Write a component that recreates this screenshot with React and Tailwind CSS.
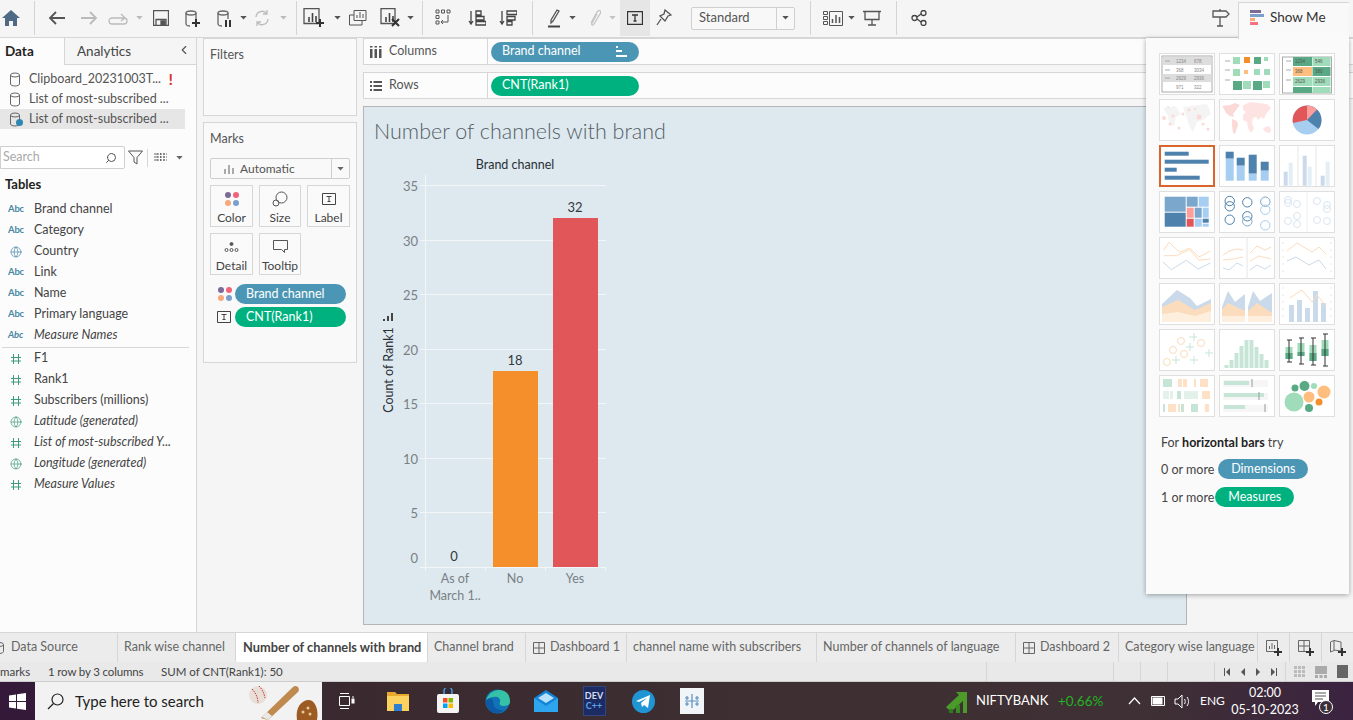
import React from "react";
import { Globe, ChevronLeft, Search } from "lucide-react";

const S = ({ w = 22, h = 22, children, vb, c = "#555", sw = 1.3 }) => (
  <svg width={w} height={h} viewBox={vb || `0 0 ${w} ${h}`} fill="none" stroke={c} strokeWidth={sw} className="shrink-0">
    {children}
  </svg>
);
const Caret = ({ c = "#777" }) => (
  <svg width="7" height="4" viewBox="0 0 8 5" className="shrink-0"><path d="M0 0h8L4 4.5z" fill={c} /></svg>
);
const Cell = ({ className, children }) => <div className={`flex shrink-0 items-center justify-center h-full ${className}`}>{children}</div>;
const Sep = () => <div className="w-px h-[34px] bg-[#d4d4d4] shrink-0" />;

const Bars = ({ c = "#555" }) => <g stroke={c} strokeWidth="1.6"><path d="M6 14V9M9.5 14V5M13 14V8" /></g>;
const Db = ({ c = "#666" }) => (
  <g stroke={c}>
    <ellipse cx="9" cy="5" rx="5" ry="2" />
    <path d="M4 5v11c0 1 2 2 4 2M14 5v6" />
  </g>
);
const Plus = ({ x, y, c = "#333" }) => <path d={`M${x - 4} ${y}h8M${x} ${y - 4}v8`} stroke={c} strokeWidth="2" />;

function Toolbar() {
  return (
    <div className="flex items-center h-[38px] pb-px bg-[#f5f5f5] border-b border-[#d6d6d6] shrink-0">
      <Cell className="w-[22px]"><svg width="18" height="16" viewBox="0 0 18 16"><path d="M9 0L0 8h3v8h4v-5h4v5h4V8h3z" fill="#4f6a85" /></svg></Cell>
      <Cell className="w-[24px]"><Sep /></Cell>
      <Cell className="w-[22px]"><S w={18} h={16} c="#555" sw={1.8}><path d="M17 8H2M8 2L2 8l6 6" /></S></Cell>
      <Cell className="w-[42px]"><S w={18} h={16} c="#bbb" sw={1.8}><path d="M1 8h15M10 2l6 6-6 6" /></S></Cell>
      <Cell className="w-[16px]"><S w={20} h={14} c="#bbb"><path d="M16 7H4a3 3 0 0 0 0 6h12a3 3 0 0 0 0-6M13 3l4 4-4 3" /></S></Cell>
      <Cell className="w-[26px]"><Caret c="#bbb" /></Cell>
      <Cell className="w-[18px]"><S w={16} h={16} c="#555"><path d="M.5.5h15v15H.5zM3 15.5v-6h10v6" /><path d="M8 11h4v4H8z" fill="#555" /></S></Cell>
      <Cell className="w-[44px]"><S w={20} h={20}><Db /><Plus x={14} y={15} /></S></Cell>
      <Cell className="w-[20px]"><S w={20} h={20}><Db /><path d="M12 12v7M16 12v7" stroke="#333" strokeWidth="2" /></S></Cell>
      <Cell className="w-[18px]"><Caret c="#555" /></Cell>
      <Cell className="w-[20px]"><S w={18} h={18} c="#bbb"><path d="M3 8a6 6 0 0 1 11-3M15 10a6 6 0 0 1-11 3M14 1v4h-4M4 17v-4h4" /></S></Cell>
      <Cell className="w-[22px]"><Caret c="#bbb" /></Cell>
      <Cell className="w-[4px]"><Sep /></Cell>
      <Cell className="w-[32px]"><S w={22} h={20} c="#555"><path d="M1 .5h15v15H1z" /><Bars c="#444" /><Plus x={17} y={15} /></S></Cell>
      <Cell className="w-[14px]"><Caret c="#555" /></Cell>
      <Cell className="w-[28px]"><S w={18} h={16} c="#555" sw={1}><path d="M5 .5h12v10H5zM5 5H.5v10H13v-4" /><path d="M8 8V5M11 8V2M14 8V4" /></S></Cell>
      <Cell className="w-[36px]"><S w={20} h={20} c="#555"><path d="M1 .5h14v15H1z" /><Bars c="#444" /><path d="M12 11l7 7M19 11l-7 7" stroke="#333" strokeWidth="2" /></S></Cell>
      <Cell className="w-[4px]"><Caret c="#555" /></Cell>
      <Cell className="w-[20px]"><Sep /></Cell>
      <Cell className="w-[22px]"><S w={16} h={18} c="#555" sw={1}><path d="M1 1h3v3H1zM6.500 1h3v3h-3zM12 1h3v3h-3zM1 6.500h3v3H1zM1 12h3v3H1zM13 6v7H6M8 11l-2 2 2 2" /></S></Cell>
      <Cell className="w-[46px]"><S w={18} h={16} c="#444"><path d="M3 1v13M1 11l2 3 2-3" /><path d="M8 1h5v4H8zM8 6.500h8v3.500H8zM8 11.500h10v3.500H8z" /></S></Cell>
      <Cell className="w-[16px]"><S w={18} h={16} c="#444"><path d="M3 1v13M1 11l2 3 2-3" /><path d="M8 1h10v3.500H8zM8 6.500h8v3.500H8zM8 11.500h5v3.500H8z" /></S></Cell>
      <Cell className="w-[32px]"><Sep /></Cell>
      <Cell className="w-[12px]"><S w={14} h={20} c="#555"><path d="M4 12L10 2l2 1-6 10-2 2z" /><path d="M1 18.500h12" stroke="#444" strokeWidth="2" /></S></Cell>
      <Cell className="w-[24px]"><Caret c="#555" /></Cell>
      <Cell className="w-[20px]"><S w={14} h={18} c="#c4c4c4"><path d="M4 14L10 3c2-3 5-1 3 2L7 15c-1 2-3 1-2-1l5-9" /></S></Cell>
      <Cell className="w-[16px]"><Caret c="#c4c4c4" /></Cell>
      <Cell className="w-[30px] bg-[#e6e6e6]"><S w={16} h={14} c="#333"><path d="M.5.5h15v13H.5z" /><path d="M5 4h6M8 4v6M6.500 10h3" /></S></Cell>
      <Cell className="w-[28px]"><S w={16} h={18} c="#555"><path d="M9 1l6 5-3 1-3 5-5-5 4-2zM5 10l-4 6" /></S></Cell>
      <div className="ml-[13px] w-[104px] h-[23px] shrink-0 border border-[#cfcfcf] rounded-[2px] bg-[#f8f8f8] flex items-center text-[13px] text-[#555]">
        <div className="flex-1 pl-[7px]">Standard</div>
        <div className="w-[18px] h-full border-l border-[#cfcfcf] flex items-center justify-center"><Caret c="#555" /></div>
      </div>
      <Cell className="w-[30px]"><Sep /></Cell>
      <Cell className="w-[16px]"><S w={20} h={15} c="#555" sw={1}><path d="M.5.500h4v3h-4zM.5 5.500h4v3h-4zM.5 10.500h4v3h-4zM6.500.5h13v14h-13z" /><path d="M9.500 12V8M13 12V4M16.500 12V6" strokeWidth="1.500" /></S></Cell>
      <Cell className="w-[20px]"><Caret c="#555" /></Cell>
      <Cell className="w-[22px]"><S w={18} h={16} c="#555"><path d="M0 1.500h18M2 1.500v8h14v-8M9 9.500v5M5 15h8" /></S></Cell>
      <Cell className="w-[26px]"><Sep /></Cell>
      <Cell className="w-[20px]"><S w={16} h={16} c="#444"><circle cx="3.500" cy="8" r="2.500" /><circle cx="12.500" cy="3" r="2.500" /><circle cx="12.500" cy="13" r="2.500" /><path d="M6 7l4-3M6 9l4 3" /></S></Cell>
      <div className="flex-1" />
      <Cell className="w-[34px]"><S w={18} h={18} c="#555"><path d="M1 2h13l3 3-3 3H1zM8 8v9M5 17h6M8 0v2" /></S></Cell>
      <div className="w-[115px] shrink-0" />
    </div>
  );
}

const Abc = () => <span className="w-[16px] text-[9.500px] font-bold text-[#4a87a3] tracking-[-0.2px]">Abc</span>;
const GlobeI = ({ c = "#4a87a3" }) => <span className="w-[16px] flex justify-center"><Globe size={12} color={c} strokeWidth={1.4} /></span>;
const HashI = () => <svg width="16" height="12" viewBox="0 0 16 12" stroke="#3f9c80" className="shrink-0"><path d="M5.500 1v10M10.500 1v10M3 4.500h10M3 8h10" /></svg>;

const Field = ({ icon, italic, children }) => (
  <div className={`h-[21px] flex items-center pl-[8px] gap-[10px] text-[#444] text-[12.500px] whitespace-nowrap ${italic ? "italic" : ""}`}>
    {icon}<span>{children}</span>
  </div>
);
const DsIcon = () => <svg width="14" height="15" viewBox="0 0 14 15" fill="none" stroke="#666" className="shrink-0"><ellipse cx="6" cy="3" rx="4.500" ry="2" /><path d="M1.500 3v9c0 1 2 2 4.500 2s4.500-1 4.500-2V3" /></svg>;

function DataPane() {
  return (
    <div className="w-[197px] shrink-0 bg-[#fcfcfc] border-r border-[#d6d6d6] flex flex-col">
      <div className="flex h-[27px] text-[13.500px] shrink-0">
        <div className="w-[65px] pl-[5px] pt-[3px] font-bold text-[#222] border-r border-[#d6d6d6]">Data</div>
        <div className="flex-1 bg-[#f5f5f5] border-b border-[#d6d6d6] pl-[12px] pt-[3px] text-[#444] flex justify-between pr-[5px]">
          <span>Analytics</span><ChevronLeft size={14} color="#555" className="mt-[2px]" />
        </div>
      </div>
      <div className="pt-[4px] text-[12.500px] text-[#555] shrink-0">
        <div className="h-[20px] flex items-center pl-[9px] gap-[6px] w-[185px]"><DsIcon /><span className="truncate flex-1">Clipboard_20231003T...</span><span className="text-[#d33] font-bold text-[16px] pr-[12px]">!</span></div>
        <div className="h-[20px] flex items-center pl-[9px] gap-[6px] w-[185px]"><DsIcon /><span>List of most-subscribed ...</span></div>
        <div className="h-[20px] flex items-center pl-[9px] gap-[6px] w-[185px] bg-[#e6e6e6] relative"><DsIcon /><span>List of most-subscribed ...</span>
          <span className="absolute left-[16px] top-[10px] w-[7px] h-[7px] rounded-full bg-[#2f86b0]" />
        </div>
      </div>
      <div className="mt-[17px] h-[23px] flex items-center shrink-0">
        <div className="w-[125px] h-[23px] border border-[#cfcfcf] rounded-r-[2px] bg-white flex items-center justify-between pl-[2px] pr-[7px] text-[12.500px] text-[#aaa]">
          <span>Search</span><Search size={12} color="#555" className="-scale-x-100" />
        </div>
        <svg width="15" height="15" viewBox="0 0 15 15" fill="none" stroke="#555" className="ml-[3px] shrink-0"><path d="M.5 1h14L9 7.500V14L6 12V7.500z" /></svg>
        <div className="w-px h-[18px] bg-[#d6d6d6] ml-[4px]" />
        <svg width="13" height="9" viewBox="0 0 13 9" stroke="#666" className="ml-[6px]"><path d="M0 1h13M0 4h13M0 7h13M3 0v9M6.500 0v9M10 0v9" strokeDasharray="2 1" /></svg>
        <span className="ml-[9px]"><Caret c="#666" /></span>
      </div>
      <div className="mt-[6px] pl-[5px] h-[20px] font-bold text-[13px] text-[#222] shrink-0">Tables</div>
      <div className="mt-[4px]">
        <Field icon={<Abc />}>Brand channel</Field>
        <Field icon={<Abc />}>Category</Field>
        <Field icon={<GlobeI />}>Country</Field>
        <Field icon={<Abc />}>Link</Field>
        <Field icon={<Abc />}>Name</Field>
        <Field icon={<Abc />}>Primary language</Field>
        <Field icon={<Abc />} italic>Measure Names</Field>
        <div className="h-px bg-[#d6d6d6] ml-[2px] mr-[7px] mt-px" />
        <Field icon={<HashI />}>F1</Field>
        <Field icon={<HashI />}>Rank1</Field>
        <Field icon={<HashI />}>Subscribers (millions)</Field>
        <Field icon={<GlobeI c="#3f9c80" />} italic>Latitude (generated)</Field>
        <Field icon={<HashI />} italic>List of most-subscribed Y...</Field>
        <Field icon={<GlobeI c="#3f9c80" />} italic>Longitude (generated)</Field>
        <Field icon={<HashI />} italic>Measure Values</Field>
      </div>
    </div>
  );
}

const Dots = () => (
  <svg width="16" height="16" viewBox="0 0 16 16" className="shrink-0">
    <circle cx="4" cy="4" r="3" fill="#7b6b95" /><circle cx="12" cy="4" r="3" fill="#f0657c" />
    <circle cx="4" cy="12" r="3" fill="#f7a97a" /><circle cx="12" cy="12" r="3" fill="#7b9fcf" />
  </svg>
);
const TBox = ({ w = 14, h = 12 }) => (
  <svg width={w} height={h} viewBox="0 0 14 12" fill="none" stroke="#444" className="shrink-0"><path d="M.5.500h13v11H.5z" /><path d="M4.500 3.500h5M7 3.500v5M5.500 8.500h3" /></svg>
);
const MarkBtn = ({ label, icon }) => (
  <div className="h-[42px] border border-[#d6d6d6] bg-[#fafafa] flex flex-col items-center pt-[5px] text-[12px] text-[#444]">
    <div className="h-[16px] flex items-center shrink-0">{icon}</div>
    <span className="mt-[3px] h-[16px] leading-[16px] shrink-0">{label}</span>
  </div>
);

function Cards() {
  return (
    <div className="w-[166px] shrink-0 flex flex-col gap-[6px] pl-[6px] pr-[6px]">
      <div className="h-[78px] border border-[#d6d6d6] bg-[#f9f9f9] pl-[6px] pt-[7px] text-[12.500px] text-[#555]">Filters</div>
      <div className="h-[241px] border border-[#d6d6d6] bg-[#f9f9f9] px-[6px] pt-[7px] text-[12.500px] text-[#555]">
        <div className="h-[16px]">Marks</div>
        <div className="mt-[12px] h-[21px] border border-[#cfcfcf] rounded-[2px] flex items-center text-[12px]">
          <svg width="12" height="10" viewBox="0 0 12 10" stroke="#aaa" strokeWidth="2" className="ml-[12px]"><path d="M2 10V5M6 10V1M10 10V4" /></svg>
          <span className="ml-[5px] flex-1">Automatic</span>
          <div className="w-[18px] h-full border-l border-[#cfcfcf] flex items-center justify-center"><Caret c="#666" /></div>
        </div>
        <div className="mt-[6px] grid grid-cols-[43px_42px_43px] gap-x-[6px] gap-y-[6px]">
          <MarkBtn label="Color" icon={<Dots />} />
          <MarkBtn label="Size" icon={<svg width="16" height="16" viewBox="0 0 16 16" fill="none" stroke="#555"><circle cx="9.500" cy="6.500" r="5.500" /><circle cx="4" cy="12" r="3" /></svg>} />
          <MarkBtn label="Label" icon={<TBox />} />
          <MarkBtn label="Detail" icon={<svg width="15" height="12" viewBox="0 0 15 12" fill="none" stroke="#555"><circle cx="7.500" cy="3" r="1.500" fill="#555" /><circle cx="2.500" cy="9" r="1.500" /><circle cx="7.500" cy="9" r="1.500" /><circle cx="12.500" cy="9" r="1.500" /></svg>} />
          <MarkBtn label="Tooltip" icon={<svg width="15" height="14" viewBox="0 0 15 14" fill="none" stroke="#555"><path d="M.5.500h14v9h-3v3l-3-3H.5z" /></svg>} />
        </div>
        <div className="mt-[9px] flex items-center h-[20px] pl-[7px]">
          <Dots /><div className="w-[111px] h-[20px] ml-[2px] rounded-full bg-[#4c96b5] text-white text-[12.500px] flex items-center pl-[11px]">Brand channel</div>
        </div>
        <div className="mt-[3px] flex items-center h-[20px] pl-[7px]">
          <TBox /><div className="w-[111px] h-[20px] ml-[4px] rounded-full bg-[#00b180] text-white text-[12.500px] flex items-center pl-[11px]">CNT(Rank1)</div>
        </div>
      </div>
    </div>
  );
}

function Shelf({ label, icon, pill, pillClass, right, className }) {
  return (
    <div className={`h-[27px] border-y border-[#d6d6d6] bg-[#fcfcfc] flex items-center shrink-0 ${className}`}>
      <div className="w-[125px] h-full pl-[6px] flex items-center gap-[7px] text-[12.500px] text-[#555] border-x border-[#d6d6d6] shrink-0">{icon}<span>{label}</span></div>
      <div className={`ml-[3px] w-[148px] h-[20px] rounded-full text-white text-[12.500px] flex items-center justify-between pl-[11px] pr-[12px] ${pillClass}`}>
        <span>{pill}</span>{right}
      </div>
    </div>
  );
}

function Chart() {
  const ticks = [[35, 185.5], [30, 240.5], [25, 294.5], [20, 349.5], [15, 403.500], [10, 458.5], [5, 512.500]];
  return (
    <svg viewBox="374 150 260 460" width="260" height="460" className="block shrink-0 ml-[10px]" fontFamily="Lato, sans-serif">
      <text x="515" y="169" textAnchor="middle" fontSize="12.500" fill="#2a2f35">Brand channel</text>
      {ticks.map(([v, y]) => (
        <g key={v}>
          <path d={`M420 ${y}H606`} stroke="#f2f6f8" />
          <text x="418" y={y + 5} textAnchor="end" fontSize="13" fill="#7a7f85">{v}</text>
        </g>
      ))}
      <text x="418" y="563" textAnchor="end" fontSize="13" fill="#7a7f85">0</text>
      <path d="M425.500 175V571M420 567.500H606M485.500 567v4M545.500 567v4M605.500 567v4" stroke="#f2f6f8" />
      <rect x="493" y="371" width="45" height="196" fill="#f58f2c" />
      <rect x="553" y="218" width="45" height="349" fill="#e15759" />
      <text x="454" y="561" textAnchor="middle" fontSize="13" fill="#33383d">0</text>
      <text x="515" y="365" textAnchor="middle" fontSize="13" fill="#33383d">18</text>
      <text x="575" y="212" textAnchor="middle" fontSize="13" fill="#33383d">32</text>
      <text x="455" y="583" textAnchor="middle" fontSize="12.500" fill="#7a7f85">As of</text>
      <text x="455" y="600" textAnchor="middle" fontSize="12.500" fill="#7a7f85">March 1..</text>
      <text x="515" y="583" textAnchor="middle" fontSize="12.500" fill="#7a7f85">No</text>
      <text x="575" y="583" textAnchor="middle" fontSize="12.500" fill="#7a7f85">Yes</text>
      <text transform="rotate(-90 393 370)" x="393" y="370" textAnchor="middle" fontSize="12.500" fill="#2a2f35">Count of Rank1</text>
      <path d="M384 321v-2M388 321v-5M392 321v-8" stroke="#444" strokeWidth="2" />
    </svg>
  );
}

const Line = ({ d, c }) => <polyline points={d} fill="none" stroke={c} strokeWidth="1" />;
const PEACH = "#fbdcbc", BLUE = "#cbdaea";
const thumbs = [
  <g key="1" fontSize="4.500" fill="#888" fontFamily="Liberation Sans">
    <rect x="3" y="3" width="50" height="36" fill="#fff" stroke="#aaa" />
    <rect x="3.500" y="4" width="49" height="8" fill="#ddd" /><rect x="3.500" y="21" width="49" height="8" fill="#ddd" />
    <path d="M6 8h5M6 17h5M6 25h5" stroke="#aaa" />
    <text x="17" y="10">1234</text><text x="35" y="10">678</text><text x="17" y="19">368</text><text x="35" y="19">3034</text><text x="17" y="27">2629</text><text x="35" y="27">2936</text><text x="17" y="36">971</text><text x="35" y="36">322</text>
  </g>,
  <g key="2">
    <path d="M6 8h5M6 17h5M6 27h5" stroke="#aaa" />
    {[[14, 4, 7, "#a0dcb9"], [25, 4, 6, "#f28e2b"], [35, 4, 7, "#59a984"], [45, 4, 4, "#a0dcb9"], [14, 16, 7, "#a0dcb9"], [25, 17, 4, "#ffbe7d"], [35, 16, 6, "#a0dcb9"], [45, 16, 6, "#a0dcb9"], [14, 28, 9, "#59a984"], [24, 28, 8, "#a0dcb9"], [34, 28, 9, "#59a984"], [44, 28, 7, "#a0dcb9"]].map(([x, y, s, c], i) => <rect key={i} x={x} y={y} width={s} height={s} fill={c} />)}
  </g>,
  <g key="3" fontSize="4.500" fill="#555" fontFamily="Liberation Sans">
    <rect x="3.500" y="4" width="49" height="36" fill="#fff" stroke="#aaa" />
    <path d="M7 8h5M7 17h5M7 27h5" stroke="#aaa" />
    <rect x="14" y="4" width="19" height="9" fill="#59a984" /><rect x="33.500" y="4" width="18" height="9" fill="#a0dcb9" />
    <rect x="14" y="14" width="19" height="9" fill="#ffbe7d" /><rect x="33.500" y="14" width="18" height="9" fill="#59a984" />
    <rect x="14" y="24" width="19" height="9" fill="#a0dcb9" /><rect x="33.500" y="24" width="18" height="9" fill="#a0dcb9" />
    <rect x="14" y="34" width="19" height="6" fill="#59a984" /><rect x="33.500" y="34" width="18" height="6" fill="#a0dcb9" />
    <text x="16" y="10">1234</text><text x="36" y="10">546</text><text x="16" y="20">368</text><text x="36" y="20">380</text><text x="16" y="30">2629</text><text x="36" y="30">2936</text>
  </g>,
  <g key="4">
    <path d="M4 9l12-2 6 8-5 3-2 9-4-1-2-9zM24 8l24-3 4 10-8 6-6 2-4 10-4-6-2-8z" fill="#f4f4f4" />
    {[[5, 19, 2], [9, 8, 1], [14, 17, 1.500], [24, 15, 1.500], [30, 11, 1.500], [40, 18, 2.500], [11, 25, 1.500], [44, 25, 1.500], [49, 30, 1.500], [20, 29, 1.500], [36, 10, 1]].map(([x, y, r], i) => <circle key={i} cx={x} cy={y} r={r} fill="#fbd9d7" />)}
  </g>,
  <g key="5" fill="#fbd9d7">
    <path d="M3 7l8-1 5-2 5 2-4 5-3 4 1 3-4-1-4-3-2-4zM13 20l5 2 1 4-3 9-2-1-1-8z" />
    <path d="M24 6l8-3 16 2 4 4-5 6-2 5-3-2-3 3-2-3-3 1-1 5 2 6-3 4-3-5-1-6-4-2v-5l3-3-3-2z" fill="#fde4e3" />
    <path d="M44 29l6-2 2 4-1 3-5-1z" fill="#fde4e3" />
  </g>,
  <g key="6">
    <circle cx="28" cy="21" r="14.500" fill="#a7cdf0" />
    <path d="M28 21V6.500A14.500 14.500 0 0 1 42.500 21a14 14 0 0 1-3 9z" fill="#4e81ab" />
    <path d="M28 21V6.500a14 14 0 0 1 10 4z" fill="#ff9d9a" />
    <path d="M28 21L14 24A14.500 14.500 0 0 1 28 6.500z" fill="#e15759" />
  </g>,
  <g key="7" fill="#4e81ab">
    <rect x="5.700" y="6.700" width="24" height="4" /><rect x="5.700" y="14.700" width="44" height="4" /><rect x="5.700" y="22.700" width="12" height="4" /><rect x="5.700" y="30.700" width="35" height="4" />
  </g>,
  <g key="8">
    {[[6.700, 6.700, 13.700], [17.700, 12.700, 20.700], [29.700, 9.700, 28.700], [41.700, 16.700, 25.700]].map(([x, t, m], i) => (
      <g key={i}><rect x={x} y={t} width="8" height={m - t} fill="#4e81ab" /><rect x={x} y={m} width="8" height={35.700 - m} fill="#a7cdf0" /></g>
    ))}
  </g>,
  <g key="9">
    <path d="M19 1v40M37 1v40" stroke="#e6e6e6" />
    {[[4.700, 26.700, BLUE], [9.700, 17.700, "#e4eef7"], [23.700, 10.700, BLUE], [28.700, 21.700, "#e4eef7"], [41.700, 30.700, BLUE], [46.700, 16.700, "#e4eef7"]].map(([x, t, c], i) => <rect key={i} x={x} y={t} width="4" height={40.700 - t} fill={c} />)}
  </g>,
  <g key="10">
    {[[5.700, 5.700, 21, 15, "#7ba7cc"], [5.700, 21.700, 21, 14, "#4e81ab"], [27.700, 5.700, 11, 10, "#7ba7cc"], [39.700, 5.700, 10, 10, "#a7cdf0"], [27.700, 16.700, 7, 10, "#ff9d9a"], [35.700, 16.700, 7, 10, "#7ba7cc"], [43.700, 16.700, 6, 10, "#a7cdf0"], [27.700, 27.700, 7, 8, "#e15759"], [35.700, 27.700, 7, 8, "#a7cdf0"], [43.700, 27.700, 6, 4, "#4e81ab"], [43.700, 32.700, 6, 3, "#a7cdf0"]].map(([x, y, w, h, c], i) => <rect key={i} x={x} y={y} width={w} height={h} fill={c} />)}
  </g>,
  <g key="11" fill="none" strokeWidth="1">
    {[[10.700, 10, "#4e81ab"], [10.700, 15.300, "#4e81ab"], [28.300, 11.300, "#4e81ab"], [46.300, 10.700, "#7ba7cc"], [46.300, 18.700, "#a7cdf0"], [10.700, 28.700, "#4e81ab"], [28.300, 25.300, "#4e81ab"], [28.300, 30.300, "#7ba7cc"], [46.300, 34.300, "#a7cdf0"]].map(([x, y, c], i) => <circle key={i} cx={x} cy={y} r="4.700" stroke={c} />)}
  </g>,
  <g key="12" fill="none" stroke="#d8e5f0">
    <path d="M28 1v40" stroke="#eee" />
    {[[9, 9], [9, 12], [18, 13], [18, 25], [9, 30], [18, 33], [38, 10], [48, 14], [48, 18], [38, 29], [48, 30]].map(([x, y], i) => <circle key={i} cx={x} cy={y} r="3.500" />)}
  </g>,
  <g key="13"><Line d="4.700,13.300 10,5.300 20.700,15.300 30.700,11 40,20 51.300,14" c={PEACH} /><Line d="4.700,18.700 17.300,18.700 30.700,12.700 40,23.300 51.300,22" c={PEACH} /><Line d="4,25 12.300,32.700 27.300,23.300 39,32 51.300,26" c={BLUE} /></g>,
  <g key="14"><path d="M28 1v40" stroke="#e6e6e6" /><Line d="4,18 10,14 18,12 24,13" c={PEACH} /><Line d="4,23 14,22 24,20" c={PEACH} /><Line d="4,31 10,33 18,26 24,29" c={BLUE} /><Line d="31,16 38,9 46,13 52,10" c={PEACH} /><Line d="31,24 40,19 52,22" c={PEACH} /><Line d="31,33 38,28 46,32 52,28" c={BLUE} /></g>,
  <g key="15"><path d="M3 6h2M3 13h2M3 20h2M3 27h2M3 34h2M51 6h2M51 13h2M51 20h2M51 27h2M51 34h2" stroke="#e6e6e6" /><Line d="8,14 18,6 33,15 40,10 47,17" c={PEACH} /><Line d="8,24 17,20 30,28 40,23 47,32" c={BLUE} /></g>,
  <g key="16"><path d="M3 21L18 7 31 15 38 23 52 16V39H3z" fill={BLUE} /><path d="M3 24L19 17 36 27 52 20V39H3z" fill="#fbdcbc" /><path d="M3 31l16-2 17 4 16-5V39H3z" fill="#fdeedd" /></g>,
  <g key="17"><path d="M3 24L9 8 16 19 26 11V39H3zM29 24L34 8 41 18 53 10V39H29z" fill={BLUE} /><path d="M3 26L9 20 26 28V39H3zM29 28L38 20 53 30V39H29z" fill="#fbdcbc" /><path d="M3 33h23v6H3zM29 33h24v6H29z" fill="#fdeedd" /></g>,
  <g key="18"><path d="M3 5h2M3 12h2M3 19h2M3 26h2M3 33h2M51 5h2M51 12h2M51 19h2M51 26h2M51 33h2" stroke="#e6e6e6" />{[[10, 22], [18, 17], [26, 25], [34, 8], [42, 20]].map(([x, t], i) => <rect key={i} x={x} y={t} width="5" height={39 - t} fill={BLUE} />)}<Line d="11,15 23,7 33,19 38,12 47,23" c={PEACH} /></g>,
  <g key="19" fill="none" stroke="#fbdcbc"><circle cx="22" cy="12" r="3.500" /><circle cx="14" cy="21" r="3.500" /><circle cx="25" cy="25" r="3.500" /><circle cx="42" cy="14" r="3.500" /><circle cx="8" cy="33" r="3.500" /><path d="M30 8h8M35 4v8M27 18h8M31 14v8M46 24h8M50 20v8M13 31h8M17 27v8M31 31h8M35 27v8" stroke="#c7e5d6" /></g>,
  <g key="20" fill="#c7e5d6">{[[5, 38], [10, 33], [15, 26], [20, 19], [25, 13], [30, 13], [35, 20], [40, 27], [45, 33]].map(([x, t], i) => <rect key={i} x={x + 0.500} y={t - 2} width="4" height={38 - t + 3} />)}</g>,
  <g key="21" stroke="#333" fill="none">{[[10, 11, 33, 18, 30, 24], [22, 9, 35, 14, 27, 23], [34, 9, 36, 16, 32, 24], [46, 5, 37, 11, 27, 20]].map(([x, t, b, bt, bb, m], i) => <g key={i}><rect x={x - 3.500} y={bt} width="7" height={bb - bt} fill="#a0dcb9" stroke="none" /><rect x={x - 3.500} y={m} width="7" height={bb - m} fill="#59a984" stroke="none" /><path d={`M${x} ${t}V${b}M${x - 2} ${t}h5M${x - 2} ${b}h5`} /></g>)}</g>,
  <g key="22">{[[4, 4, 9, "#c7e5d6"], [19, 4, 4, "#fde0c5"], [24, 4, 4, "#fde0c5"], [35, 4, 2, "#fde0c5"], [41, 4, 8, "#fde0c5"], [4, 16, 6, "#e2f2ea"], [11, 16, 3, "#e2f2ea"], [18, 16, 4, "#c7e5d6"], [25, 16, 14, "#e2f2ea"], [43, 16, 8, "#fde0c5"], [4, 29, 2, "#c7e5d6"], [9, 29, 8, "#fde0c5"], [19, 29, 2, "#fde0c5"], [22, 29, 3, "#c7e5d6"], [32, 29, 7, "#c7e5d6"], [46, 29, 4, "#fde0c5"]].map(([x, y, w, c], i) => <rect key={i} x={x} y={y} width={w} height="8" fill={c} />)}</g>,
  <g key="23"><rect x="4" y="5" width="45" height="7" fill="#f6f6f6" /><rect x="4" y="18" width="45" height="7" fill="#f6f6f6" /><rect x="4" y="30" width="45" height="7" fill="#f6f6f6" /><rect x="5" y="6" width="25" height="4" fill="#c7e5d6" /><rect x="5" y="18" width="40" height="4" fill="#c7e5d6" /><rect x="5" y="30" width="21" height="4" fill="#c7e5d6" /><path d="M33 4v8M40 17v8M46 29v8" stroke="#999" /></g>,
  <g key="24"><circle cx="15" cy="27" r="9.500" fill="#a0dcb9" /><circle cx="16" cy="13" r="3.500" fill="#59a984" /><circle cx="25.500" cy="11" r="5" fill="#59a984" /><circle cx="35" cy="11" r="3" fill="#a0dcb9" /><circle cx="30" cy="22" r="5.500" fill="#ffbe7d" /><circle cx="45" cy="17" r="6.500" fill="#ffbe7d" /><circle cx="40" cy="27" r="3.500" fill="#f28e2b" /><circle cx="30" cy="33" r="4" fill="#59a984" /></g>,
];

function Thumb({ children, active }) {
  return (
    <div className={`w-[56px] h-[42px] bg-white box-border ${active ? "border-2 border-[#d9642c]" : "border border-[#dfdfdf]"}`}>
      <svg viewBox={active ? "2 2 52 38" : "1 1 54 40"} width={active ? 52 : 54} height={active ? 38 : 40} className="block">{children}</svg>
    </div>
  );
}

function ShowMe() {
  return (
    <div className="absolute left-[1146px] top-[2px] w-[203px] h-[592px] flex flex-col items-end">
      <div className="w-[111px] h-[37px] pb-[7px] bg-[#f9f9f9] border-l border-t border-[#d6d6d6] flex items-center pl-[11px] gap-[6px] text-[13.500px] text-[#333] relative z-10">
        <svg width="14" height="15" viewBox="0 0 14 15"><rect width="11" height="3" fill="#7b6b95" /><rect y="4" width="14" height="3" fill="#7b9fcf" /><rect y="8" width="5" height="3" fill="#f7a97a" /><rect y="12" width="8" height="3" fill="#f67280" /></svg>
        <span>Show Me</span>
      </div>
      <div className="w-[203px] flex-1 -mt-px bg-[#fafafa] shadow-[0_1px_5px_rgba(0,0,0,0.35)] pt-[15px] pl-[13px]">
        <div className="grid grid-cols-[56px_56px_56px] gap-x-[4px] gap-y-[4px]">
          {thumbs.map((t, i) => <Thumb key={i} active={i === 6}>{t}</Thumb>)}
        </div>
        <div className="mt-[17px] pl-[2px] text-[12.500px] text-[#444]">
          <div className="h-[16px]">For <b className="text-[#222]">horizontal bars</b> try</div>
          <div className="mt-[9px] h-[20px] flex items-center"><span className="mt-[3px]">0 or more</span><span className="ml-[4px] w-[90px] h-[20px] rounded-full bg-[#4c96b5] text-white flex items-center justify-center">Dimensions</span></div>
          <div className="mt-[8px] h-[20px] flex items-center"><span className="mt-[3px]">1 or more</span><span className="ml-[1px] w-[79px] h-[20px] rounded-full bg-[#00b180] text-white flex items-center justify-center">Measures</span></div>
        </div>
      </div>
    </div>
  );
}

const Grid = () => <svg width="12" height="12" viewBox="0 0 12 12" fill="none" stroke="#666" className="mr-[5px] shrink-0"><path d="M.5.500h11v11H.5zM6 .5v11M.5 6h11" /></svg>;
const Tab = ({ className, children, active }) => (
  <div className={`h-full shrink-0 flex items-center whitespace-nowrap border-r border-[#d6d6d6] ${active ? "bg-white font-bold text-[#444] text-[12.800px]" : "text-[#666]"} ${className}`}>{children}</div>
);
const AddTab = ({ children }) => <div className="w-[32px] h-full shrink-0 border-l border-[#d6d6d6] flex items-center justify-center">{children}</div>;

function Tabs() {
  return (
    <div className="h-[30px] shrink-0 bg-[#ececec] border-t border-[#d6d6d6] flex text-[12.500px]">
      <Tab className="w-[118px] gap-[7px]"><svg width="9" height="12" viewBox="0 0 9 12" fill="none" stroke="#666" className="-ml-[5px] shrink-0"><ellipse cx="4.500" cy="2.500" rx="4" ry="2" /><path d="M.5 2.500v7c0 1 2 2 4 2s4-1 4-2v-7" /></svg>Data Source</Tab>
      <Tab className="w-[118px] pl-[6px]">Rank wise channel</Tab>
      <Tab className="w-[192px] pl-[7px]" active>Number of channels with brand</Tab>
      <Tab className="w-[98px] pl-[6px]">Channel brand</Tab>
      <Tab className="w-[101px] pl-[7px]"><Grid />Dashboard 1</Tab>
      <Tab className="w-[190px] pl-[6px]">channel name with subscribers</Tab>
      <Tab className="w-[199px] pl-[6px]">Number of channels of language</Tab>
      <Tab className="w-[103px] pl-[7px]"><Grid />Dashboard 2</Tab>
      <div className="w-[138px] h-full shrink-0 flex items-center pl-[6px] whitespace-nowrap overflow-hidden text-[#666]">Category wise language</div>
      <AddTab><S w={16} h={16} c="#666" sw={1}><path d="M.5.500h11v11H.5zM3.500 9V6M6 9V3M8.500 9V5" /><Plus x={12} y={12} /></S></AddTab>
      <AddTab><S w={16} h={16} c="#666" sw={1}><path d="M.5.500h11v11H.5zM6 .5v11M.5 6h11" /><Plus x={12} y={12} /></S></AddTab>
      <AddTab><S w={16} h={16} c="#666" sw={1}><path d="M.5 2l3.500-1.500v10L.5 12zM4 .5l7 1.500v9l-7-1" /><Plus x={12} y={12} /></S></AddTab>
    </div>
  );
}

function Status() {
  const V = () => <div className="h-full w-px bg-[#d6d6d6] shrink-0" />;
  return (
    <div className="h-[20px] shrink-0 bg-[#e9e9e9] flex items-center text-[11.500px] text-[#444] border-b border-[#ccc]">
      <span className="w-[48px] shrink-0">marks</span>
      <span className="w-[113px] shrink-0 tracking-[-0.15px]">1 row by 3 columns</span>
      <span className="w-[825px] shrink-0">SUM of CNT(Rank1): 50</span>
      <V /><div className="w-[126px]" /><V /><div className="w-[26px]" /><V /><div className="w-[26px]" /><V /><div className="w-[46px]" /><V />
      <div className="w-[70px] flex justify-around px-[5px] items-center">
        {["M6 1v8l-4-4zM0 1h1v8H0z", "M6 1v8l-4-4z", "M2 1v8l4-4z", "M2 1v8l4-4zM7 1h1v8H7z"].map((d, i) => <svg key={i} width="8" height="10" viewBox="0 0 8 10"><path d={d} fill="#555" /></svg>)}
      </div>
      <V />
      <div className="flex-1 flex items-center justify-around pl-[3px]">
        <svg width="12" height="12" viewBox="0 0 12 12" fill="#bbb"><path d="M0 0h3v3H0zM4 0h3v3H4zM8 0h3v3H8zM0 4h3v3H0zM4 4h3v3H4zM8 4h3v3H8zM0 8h3v3H0zM4 8h3v3H4zM8 8h3v3H8z" /></svg>
        <svg width="12" height="12" viewBox="0 0 12 12" fill="#aaa"><path d="M0 0h12v8H0zM0 9h3v3H0zM4.500 9h3v3h-3zM9 9h3v3H9z" /></svg>
        <div className="w-[11px] h-[13px] bg-[#666]" />
      </div>
    </div>
  );
}

function Taskbar() {
  return (
    <div className="h-[38px] shrink-0 flex items-center text-white bg-[linear-gradient(90deg,#34193a_0%,#3a2a30_25%,#3d2f32_60%,#3e3034_85%,#3b2340_100%)]">
      <Cell className="w-[35px]"><svg width="17" height="17" viewBox="0 0 17 17" fill="#fff"><path d="M0 2.500l7-1v6.500H0zM8 1.300L17 0v8H8zM0 9h7v6.500l-7-1zM8 9h9v8l-9-1.300z" /></svg></Cell>
      <div className="w-[287px] h-full shrink-0 bg-[#f2f2f2] flex items-center text-[#222] text-[15px] relative">
        <svg width="17" height="17" viewBox="0 0 17 17" fill="none" stroke="#222" strokeWidth="1.200" className="ml-[12px]"><circle cx="10.500" cy="6.500" r="5.500" /><path d="M6.500 10.500L1 16" /></svg>
        <span className="ml-[11px]">Type here to search</span>
        <svg width="74" height="38" viewBox="0 0 74 38" className="absolute left-[212px] top-0">
          <circle cx="11" cy="13" r="9" fill="#e8e0d8" /><path d="M5 7c3 3 6 8 6 14M12 4c3 3 5 7 6 12" stroke="#c33" strokeDasharray="1.500 1" fill="none" />
          <path d="M14 36L46 5c3-3 8 1 5 5L21 38z" fill="#c08a4e" /><path d="M15 35l5-5 5 4-4 4z" fill="#e8e8e8" />
          <path d="M50 38c-2-12 4-20 12-20 6 0 10 10 8 20z" fill="#9c5b22" /><circle cx="61" cy="26" r="1.500" fill="#e8c89a" /><circle cx="56" cy="30" r="1.500" fill="#e8c89a" /><circle cx="63" cy="32" r="1.500" fill="#e8c89a" />
        </svg>
      </div>
      <Cell className="w-[50px]"><svg width="16" height="16" viewBox="0 0 16 16" fill="none" stroke="#fff"><path d="M.5 3.500h10v9H.5zM1 .5h9M1 15.500h9M13 4h2M13 8h2" /><rect x="13" y="6" width="2" height="4" fill="#fff" /></svg></Cell>
      <Cell className="w-[52px]"><svg width="22" height="22" viewBox="0 0 22 22"><path d="M0 2h8l2 2h12v5H0z" fill="#e8a92c" /><rect y="6" width="22" height="15" fill="#fbd25e" /><rect x="7" y="14" width="8" height="7" fill="#2f7fd1" /></svg></Cell>
      <Cell className="w-[48px]"><svg width="22" height="26" viewBox="0 0 22 26"><path d="M7 6V3a4 4 0 0 1 8 0v3" fill="none" stroke="#3aa0e8" strokeWidth="1.500" /><rect y="6" width="22" height="19" rx="2" fill="#f4f4f4" /><rect x="6" y="10" width="4.500" height="4.500" fill="#f25022" /><rect x="11.500" y="10" width="4.500" height="4.500" fill="#7fba00" /><rect x="6" y="15.500" width="4.500" height="4.500" fill="#00a4ef" /><rect x="11.500" y="15.500" width="4.500" height="4.500" fill="#ffb900" /></svg></Cell>
      <Cell className="w-[50px]"><svg width="25" height="25" viewBox="0 0 25 25"><circle cx="12.500" cy="12.500" r="12" fill="#1172b8" /><path d="M1 12C3 3 12-1 19 2c5 2 6 7 6 11 0 3-3 4-7 4-3 0-4-2-3-4 1-3-2-6-6-5-4 0-7 2-8 4z" fill="#35c1a5" /><path d="M8 13c0 6 5 9 11 8-4 4-11 4-15 0-2-3-3-6-3-9 1-3 7-4 7 1z" fill="#0c59a4" /></svg></Cell>
      <Cell className="w-[48px]"><svg width="24" height="22" viewBox="0 0 24 22"><path d="M0 8l12-8 12 8v14H0z" fill="#1384d6" /><path d="M0 8l12 8 12-8v14H0z" fill="#2ea6ef" /><path d="M4 8l8-5 8 5-8 5z" fill="#b8e2fa" /></svg></Cell>
      <Cell className="w-[48px]"><div className="w-[23px] h-[30px] bg-[#1c2b63] border border-[#33447f] text-[9px] font-bold leading-[10px] flex flex-col items-center justify-center"><span className="text-[#d7dde9]">DEV</span><span className="text-[#5aa4e8]">C++</span></div></Cell>
      <Cell className="w-[50px]"><svg width="23" height="23" viewBox="0 0 23 23"><circle cx="11.500" cy="11.500" r="11.500" fill="#1f96d3" /><path d="M4 11l14-6-2 13-4-3-2 2-1-4 6-5-8 4z" fill="#fff" /></svg></Cell>
      <Cell className="w-[48px]"><div className="w-[24px] h-[26px] bg-[#f2f5f8] flex items-center justify-center"><svg width="20" height="20" viewBox="0 0 20 20" stroke="#5a8fc0" strokeWidth="1.200"><path d="M10 3v14M3 10h14M5 5v4M3 7h4M15 5v4M13 7h4M5 11v4M3 13h4M15 11v4M13 13h4" /></svg></div></Cell>
      <div className="w-[229px] shrink-0" />
      <svg width="24" height="28" viewBox="0 0 24 28" className="shrink-0"><path d="M1 20L14 8l-3-3h11v11l-3-3L6 25z" fill="#4c9a2a" /><rect x="4" y="22" width="4" height="4" fill="#2e7a1f" /><rect x="11" y="18" width="4" height="8" fill="#3a8a22" /><rect x="18" y="13" width="4" height="13" fill="#4c9a2a" /></svg>
      <span className="ml-[7px] text-[13px] w-[82px] shrink-0">NIFTYBANK</span>
      <span className="text-[13.500px] text-[#22b422] w-[60px] shrink-0">+0.66%</span>
      <svg width="13" height="8" viewBox="0 0 13 8" fill="none" stroke="#fff" strokeWidth="1.200" className="ml-[10px] shrink-0"><path d="M1 7l5.500-6L12 7" /></svg>
      <svg width="15" height="10" viewBox="0 0 15 10" fill="none" stroke="#fff" className="ml-[10px] shrink-0"><path d="M.5.500h13v9H.5z" /><rect x="2" y="2" width="9" height="6" fill="#fff" /></svg>
      <svg width="16" height="15" viewBox="0 0 16 15" fill="none" stroke="#fff" className="ml-[8px] shrink-0"><path d="M1 5h3l4-4v13l-4-4H1zM10.500 5c1 1.500 1 3.500 0 5M13 3c2 3 2 6 0 9" /></svg>
      <span className="ml-[10px] w-[24px] text-[12px] shrink-0">ENG</span>
      <div className="w-[80px] ml-[1px] text-[12.500px] text-center leading-[17px] shrink-0"><div>02:00</div><div>05-10-2023</div></div>
      <div className="ml-[7px] relative w-[22px] h-[26px] shrink-0">
        <svg width="17" height="16" viewBox="0 0 17 16" className="absolute left-0 top-[2px]"><path d="M0 0h17v12H6l-3 4v-4H0z" fill="#fff" /><path d="M3 3h11M3 6h11M3 9h8" stroke="#555" /></svg>
        <span className="absolute left-[7px] top-[12px] w-[14px] h-[14px] rounded-full border border-white bg-[#3c3038] text-[10px] leading-[12px] text-center">1</span>
      </div>
    </div>
  );
}

export default function App() {
  return (
    <div className="relative w-[1353px] h-[720px] overflow-hidden flex flex-col bg-[#f5f5f5] font-['Lato','Noto_Sans',sans-serif]">
      <Toolbar />
      <div className="flex h-[594px] shrink-0">
        <DataPane />
        <Cards />
        <div className="flex-1 min-w-0 flex flex-col">
          <Shelf label="Columns" pill="Brand channel" pillClass="bg-[#4c96b5]"
            icon={<svg width="12" height="12" viewBox="0 0 12 12" fill="#555"><rect x="0" y="3" width="2.500" height="9" /><rect x="4.500" y="3" width="2.500" height="9" /><rect x="9" y="3" width="2.500" height="9" /><rect x="0" y="0" width="2.500" height="1.500" /><rect x="4.500" y="0" width="2.500" height="1.500" /><rect x="9" y="0" width="2.500" height="1.500" /></svg>}
            right={<svg width="11" height="11" viewBox="0 0 11 11" fill="#fff"><rect width="2" height="2" /><rect y="4" width="6" height="2" /><rect y="9" width="11" height="2" /></svg>} />
          <Shelf label="Rows" pill="CNT(Rank1)" pillClass="bg-[#00b180]" className="mt-[7px]"
            icon={<svg width="12" height="10" viewBox="0 0 12 10" fill="#555"><path d="M0 0h2v2H0zM3.500 0H12v2H3.500zM0 4h2v2H0zM3.500 4H12v2H3.500zM0 8h2v2H0zM3.500 8H12v2H3.500z" /></svg>} />
          <div className="mt-[7px] w-[824px] h-[519px] shrink-0 bg-[#dde9ef] border border-[#b5b5b5]">
            <div className="h-[43px] pl-[10px] pt-[11px] text-[21.500px] leading-[26px] font-light text-[#555e66] whitespace-nowrap">Number of channels with brand</div>
            <Chart />
          </div>
        </div>
      </div>
      <Tabs />
      <Status />
      <Taskbar />
      <ShowMe />
    </div>
  );
}
